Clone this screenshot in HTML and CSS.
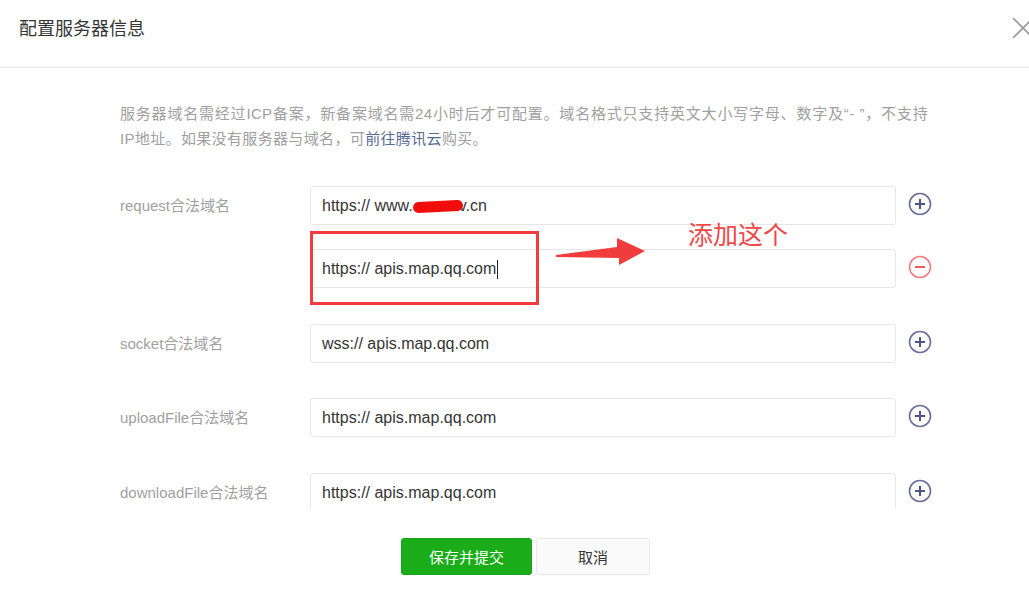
FILE: index.html
```html
<!DOCTYPE html>
<html lang="zh-CN">
<head>
  <meta charset="UTF-8">
  <title>配置服务器信息</title>
  <link rel="stylesheet" href="styles.css">
</head>
<body>
  <div class="dialog">
    <div class="dialog-header">
      <h3 class="dialog-title">配置服务器信息</h3>
      <svg class="close" width="22" height="22" viewBox="0 0 22 22">
        <path d="M1 1 L21 21 M21 1 L1 21" stroke="#9a9a9a" stroke-width="1.6" fill="none"/>
      </svg>
    </div>

    <p class="tips">
      <span class="tips-line tips-line-full">服务器域名需经过ICP备案，新备案域名需24小时后才可配置。域名格式只支持英文大小写字母、数字及“- ”，不支持</span>
      <span class="tips-line">IP地址。如果没有服务器与域名，可<a href="#" class="link">前往腾讯云</a>购买。</span>
    </p>

    <div class="form">
      <div class="field">
        <label class="field-label">request合法域名</label>
        <div class="field-inputs">
          <div class="input-row">
            <div class="input">https:// www.<span class="scribble"></span>v.cn</div>
            <svg class="op" width="24" height="24" viewBox="0 0 24 24">
              <circle cx="12" cy="12" r="10.5" stroke="#6a6f9a" stroke-width="1.6" fill="none"/>
              <path d="M7 12 H17 M12 7 V17" stroke="#4e5484" stroke-width="2" fill="none"/>
            </svg>
          </div>
          <div class="input-row">
            <div class="input">https:// apis.map.qq.com<span class="caret"></span></div>
            <svg class="op" width="24" height="24" viewBox="0 0 24 24">
              <circle cx="12" cy="12" r="10.5" stroke="#ee8080" stroke-width="1.6" fill="none"/>
              <path d="M7 12 H17" stroke="#e85c5c" stroke-width="2" fill="none"/>
            </svg>
          </div>
        </div>
      </div>

      <div class="field">
        <label class="field-label">socket合法域名</label>
        <div class="field-inputs">
          <div class="input-row">
            <div class="input">wss:// apis.map.qq.com</div>
            <svg class="op" width="24" height="24" viewBox="0 0 24 24">
              <circle cx="12" cy="12" r="10.5" stroke="#6a6f9a" stroke-width="1.6" fill="none"/>
              <path d="M7 12 H17 M12 7 V17" stroke="#4e5484" stroke-width="2" fill="none"/>
            </svg>
          </div>
        </div>
      </div>

      <div class="field">
        <label class="field-label">uploadFile合法域名</label>
        <div class="field-inputs">
          <div class="input-row">
            <div class="input">https:// apis.map.qq.com</div>
            <svg class="op" width="24" height="24" viewBox="0 0 24 24">
              <circle cx="12" cy="12" r="10.5" stroke="#6a6f9a" stroke-width="1.6" fill="none"/>
              <path d="M7 12 H17 M12 7 V17" stroke="#4e5484" stroke-width="2" fill="none"/>
            </svg>
          </div>
        </div>
      </div>

      <div class="field">
        <label class="field-label">downloadFile合法域名</label>
        <div class="field-inputs">
          <div class="input-row">
            <div class="input">https:// apis.map.qq.com</div>
            <svg class="op" width="24" height="24" viewBox="0 0 24 24">
              <circle cx="12" cy="12" r="10.5" stroke="#6a6f9a" stroke-width="1.6" fill="none"/>
              <path d="M7 12 H17 M12 7 V17" stroke="#4e5484" stroke-width="2" fill="none"/>
            </svg>
          </div>
        </div>
      </div>
    </div>

    <div class="actions">
      <button class="btn btn-primary">保存并提交</button>
      <button class="btn btn-default">取消</button>
    </div>

    <!-- annotation drawn over the screenshot -->
    <div class="mark-box"></div>
    <svg class="mark-arrow" width="100" height="40" viewBox="550 235 100 40">
      <polygon points="556,255 617,247 617,238 645,251 619,265 619,258 556,257" fill="#f03c3c"/>
    </svg>
    <div class="mark-text">添加这个</div>
  </div>
</body>
</html>
```

FILE: styles.css
```css
body {
  margin: 0;
  background: #fff;
  font-family: "Liberation Sans", "Noto Sans CJK SC", sans-serif;
  color: #353535;
  overflow: hidden;
}

.dialog {
  position: relative;
  width: 1029px;
  height: 597px;
}

.dialog-header {
  height: 67px;
  border-bottom: 1px solid #e7e7e7;
  display: flex;
  align-items: center;
  justify-content: space-between;
  padding-left: 19px;
}

.dialog-title {
  margin: 0;
  font-size: 18px;
  font-weight: normal;
  color: #353535;
  margin-top: -14px;
}

.close {
  margin-right: -5px;
  margin-top: -12px;
}

.tips {
  width: 808px;
  margin: 33px 0 0 120px;
  font-size: 15px;
  line-height: 25px;
  letter-spacing: 0.35px;
  color: #a0a0a0;
}

.tips-line {
  display: block;
}

.tips-line-full {
  text-align-last: justify;
}

.link {
  color: #576b95;
  text-decoration: none;
}

.form {
  margin-top: 35px;
  padding-left: 120px;
  height: 322px;
  overflow: hidden;
}

.field {
  display: flex;
  margin-bottom: 35.5px;
}

.field-label {
  width: 190px;
  flex-shrink: 0;
  font-size: 15px;
  line-height: 39px;
  color: #9f9f9f;
}

.field-inputs {
  display: flex;
  flex-direction: column;
  gap: 24px;
}

.input-row {
  display: flex;
  align-items: center;
  gap: 12px;
}

.input {
  width: 573px;
  height: 37px;
  line-height: 37px;
  padding-left: 11px;
  border: 1px solid #e7e7e7;
  border-radius: 3px;
  font-size: 16px;
  color: #353535;
}

.op {
  margin-top: -3px;
}

.scribble {
  display: inline-block;
  width: 50px;
  height: 11px;
  margin-right: -4px;
  background: #f20d0d;
  border-radius: 6px;
  vertical-align: middle;
  transform: rotate(-3deg);
}

.caret {
  display: inline-block;
  width: 1px;
  height: 19px;
  background: #222;
  vertical-align: middle;
  margin-left: 1px;
}

.actions {
  display: flex;
  gap: 4px;
  margin-top: 30px;
  padding-left: 401px;
}

.btn {
  height: 37px;
  border-radius: 3px;
  font-size: 15px;
  font-family: "Noto Sans CJK SC", sans-serif;
  cursor: pointer;
}

.btn-primary {
  width: 131px;
  background: #1aad19;
  border: 1px solid #17a416;
  color: #fff;
}

.btn-default {
  width: 114px;
  background: #fafafa;
  border: 1px solid #e9e9e9;
  color: #353535;
}

.mark-box {
  position: absolute;
  left: 310px;
  top: 231px;
  width: 223px;
  height: 68px;
  border: 3px solid #f03c3c;
}

.mark-arrow {
  position: absolute;
  left: 550px;
  top: 235px;
}

.mark-text {
  position: absolute;
  left: 688px;
  top: 217px;
  font-family: "Noto Sans CJK SC", sans-serif;
  font-size: 25px;
  line-height: 32px;
  color: #f04848;
}
```
